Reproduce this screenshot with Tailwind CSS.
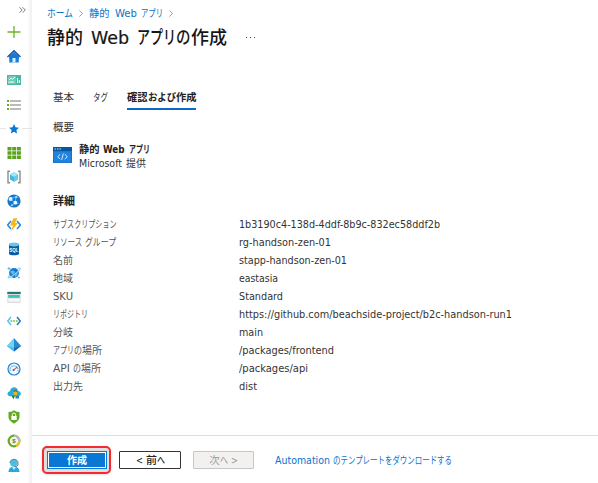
<!DOCTYPE html>
<html lang="ja"><head><meta charset="utf-8"><title>静的 Web アプリの作成</title>
<script src="https://cdn.jsdelivr.net/npm/@tailwindcss/browser@4"></script></head>
<body class="w-[598px] h-[483px] overflow-hidden flex bg-white text-[#333] text-[10.5px] font-['DejaVu_Sans_Condensed','DejaVu_Sans','Noto_Sans_CJK_JP',sans-serif] [&_[data-w]]:inline-block [&_[data-w]]:origin-left [&_[data-w]]:whitespace-pre">
<aside class="w-8 h-[483px] shrink-0 flex flex-col overflow-hidden bg-linear-to-r from-white from-84% to-[#f0f0f0]">
<div class="h-5 shrink-0 pt-[7px] pl-[19px]"><svg class="w-[7px] h-[6px]" viewBox="0 0 7 6" fill="none" stroke="#666" stroke-width=".9"><path d="M.5.3 3.2 3 .5 5.7M3.6.3 6.3 3 3.6 5.7"/></svg></div>
<nav class="flex flex-col shrink-0 pt-[0.3px] pl-[7px] [&>svg]:w-[14px] [&>svg]:h-[14px] [&>svg]:my-[5.04px] [&>svg]:shrink-0 [&>div]:h-[24.08px] [&>div]:shrink-0">
<svg viewBox="0 0 14 14"><path d="M7 1v12M.5 7h13" stroke="#6bb52b" stroke-width="1.3"/></svg>
<svg viewBox="0 0 14 14"><path d="M2.3 6h9.5v7.5H2.3z" fill="#1680da"/><path d="m0 7.4 7-6.7 7 6.7-.9 1L7 3 .9 8.4z" fill="#155ca9"/><path d="M2.3 7 7 3l4.8 4v3H2.3z" fill="#1a78d1"/><path d="M5.5 9h3v4.5h-3z" fill="#d7efff"/></svg>
<svg viewBox="0 0 14 14"><path d="M0 2h14v10H0z" fill="#4ab6a3"/><path d="M1 3h8v8H1z" fill="#6fc8b8"/><path d="m2 7 2-2 1.5 1.2L8 4M2 10V8.5M4 10V8M6 10V8M10.5 10V5M12.3 10V7" fill="none" stroke="#fff" stroke-width="1"/></svg>
<svg viewBox="0 0 14 14"><path d="M3 3h11M3 7h11M3 11h11" stroke="#777" stroke-width="1"/><path d="M0 3h2M0 7h2M0 11h2" stroke="#67ad29" stroke-width="1.8"/></svg>
<div class="-ml-[7px] flex items-center"><i class="h-px w-1.5 bg-[#e5e5e5]"></i><svg class="w-[16px] h-[14px]" viewBox="0 0 16 14"><path d="m8 2 1.5 3.3 3.5.4-2.6 2.3.7 3.5L8 9.7l-3.1 1.8.7-3.5L3 5.7l3.5-.4z" fill="#0878d4"/></svg><i class="h-px w-[10px] bg-[#e5e5e5]"></i></div>
<svg viewBox="0 0 14 14"><path d="M.5 1h4v3.5h-4zM5.2 1h4v3.5h-4zM9.9 1h4v3.5h-4zM.5 5.2h4v3.6h-4zM5.2 5.2h4v3.6h-4zM9.9 5.2h4v3.6h-4zM.5 9.5h4V13h-4zM5.2 9.5h4V13h-4zM9.9 9.5h4V13h-4z" fill="#59a31d"/></svg>
<svg viewBox="0 0 14 14"><path d="M3 1.3H1v11.4h2M11 1.3h2v11.4h-2" fill="none" stroke="#8b8b8b" stroke-width="1.4"/><path d="m7 2.3 4 2.3v4.8l-4 2.3-4-2.3V4.6z" fill="#42b8df"/><path d="m7 2.3 4 2.3L7 7 3 4.6z" fill="#a4e6f7"/><path d="M7 7v4.7l4-2.3V4.6z" fill="#68cce9"/></svg>
<svg viewBox="0 0 14 14"><circle cx="7" cy="7" r="6.6" fill="#1877cc"/><path d="M3 4.5 9 3l-1 6 3.5.5M3 4.5l5 4.5-3 2" fill="none" stroke="#61bbee" stroke-width=".9"/><circle cx="3.6" cy="5" r="2" fill="#d9f2ff"/><circle cx="9.3" cy="3" r="1.3" fill="#93d7fa"/><circle cx="8.4" cy="8.7" r="1.9" fill="#f0faff"/><circle cx="5" cy="11.2" r="1" fill="#a6ddf7"/></svg>
<svg viewBox="0 0 14 14"><path d="M4 3 .7 7 4 11M10 3l3.3 4-3.3 4" fill="none" stroke="#258ddd" stroke-width="1.6"/><path d="M6.5.3h4L8 5h3L4 13.5l2-6H3z" fill="#f9b51c"/></svg>
<svg viewBox="0 0 14 14"><path d="M2 2.3v9.5c0 2.1 10 2.1 10 0V2.3z" fill="#075ea8"/><ellipse cx="7" cy="2.5" rx="5" ry="1.9" fill="#67c6ec"/><text x="7" y="9.7" text-anchor="middle" font-size="4.5" font-weight="bold" fill="#fff" font-family="Liberation Sans">SQL</text></svg>
<svg viewBox="0 0 14 14"><circle cx="7" cy="7" r="4.9" fill="#1877ca"/><path d="M3 5.5q3-2 4.5-.3T5 8.5zM8 8l3-1-1 3-2 1z" fill="#5eb8ee"/><path d="M3 9C-.5 12.8 1 13 6 9.5S15 2 12.5 2q-1 0-2 .7" fill="none" stroke="#90d4f2" stroke-width="1.2"/><path d="M2 1v3M.5 2.5h3M12 10.5v2M11 11.5h2" stroke="#39ade2" stroke-width=".8"/></svg>
<svg viewBox="0 0 14 14"><path d="M.3 2h13.4v11H.3z" fill="#dedede"/><path d="M.3 1.8h13.4V4H.3z" fill="#207c76"/><path d="M1.2 5h11.6v2.8H1.2z" fill="#38c5b4"/><path d="M1.2 8.6h11.6v3H1.2z" fill="#f7f7f7"/></svg>
<svg viewBox="0 0 14 14"><path d="M4 3 .8 7 4 11" fill="none" stroke="#59c3ef" stroke-width="1.5"/><path d="m10 3 3.2 4-3.2 4" fill="none" stroke="#1b79c9" stroke-width="1.5"/><path d="M3.5 7h1.7M6.2 7h1.7M8.9 7h1.7" stroke="#75b82c" stroke-width="1.7"/></svg>
<svg viewBox="0 0 14 14"><path d="M7 .2 14 8l-7 5.6L0 8z" fill="#3ba7df"/><path d="M7 .2 0 8l7 2z" fill="#73d2f3"/><path d="m7 .2 7 7.8-7 2z" fill="#288bd0"/><path d="m0 8 7 2v3.6z" fill="#4ebeea"/><path d="m14 8-7 2v3.6z" fill="#1765b5"/></svg>
<svg viewBox="0 0 14 14"><circle cx="7" cy="7" r="6" fill="#effaff" stroke="#267fcd" stroke-width="1.2"/><path d="M3.2 9a4 4 0 1 1 7.6 0" fill="none" stroke="#62b6e9" stroke-width="1.3" stroke-dasharray="1.5 .7"/><path d="m6.2 8.3 4-3.3" stroke="#e24c50" stroke-width="1.1"/><circle cx="6.5" cy="8" r="1" fill="#4d657c"/></svg>
<svg viewBox="0 0 14 14"><path d="M3.5 10.3C-.5 10.3-.4 5.7 3 5.2 4-.5 10.8.7 11 5c4 .5 3.5 5.3.2 5.3z" fill="#23addf"/><path d="M4.5 9.8h3.5l-1.5 3.4z" fill="#23802f"/><path d="M6.5 5.7h3.7v3.2H6.5z" fill="#edb51c"/><path d="M7.2 6V4.5h2.2V6" fill="none" stroke="#705d27" stroke-width=".8"/><path d="M8.5 10H12v2.5H8.5z" fill="#2584c7"/></svg>
<svg viewBox="0 0 14 14"><path d="M7 .2q2.6 1.9 5.5 1.9v5q0 3.6-5.5 6.7-5.5-3.1-5.5-6.7v-5Q4.4 2.1 7 .2z" fill="#64a91e"/><path d="M4.3 6h5.4v4H4.3z" fill="#fff"/><path d="M5.3 6V4.5q0-1.4 1.7-1.4t1.7 1.4V6" fill="none" stroke="#fff"/></svg>
<svg viewBox="0 0 14 14"><circle cx="7" cy="7" r="5.3" fill="none" stroke="#69a92d" stroke-width="2.3"/><path d="M7 1.7A5.3 5.3 0 0 1 12.3 7" fill="none" stroke="#bababa" stroke-width="2.3"/><path d="M12.3 7A5.3 5.3 0 0 1 9 11.9" fill="none" stroke="#ecc637" stroke-width="2.3"/><circle cx="7" cy="7" r="3.2" fill="#eef4e7"/><text x="7" y="9.2" text-anchor="middle" font-size="6" font-weight="bold" fill="#527f2a" font-family="Liberation Sans">$</text></svg>
<svg viewBox="0 0 14 14"><path d="M1.5 14q0-5.2 5.5-5.2t5.5 5.2z" fill="#25a9dc"/><circle cx="6.8" cy="5" r="3.7" fill="#48bee8"/><path d="M3 5C3 0 11 0 11 5v2q-1 2-3.5 1.7" fill="none" stroke="#777" stroke-width="1"/><path d="m5 9 2 3 2-3z" fill="#c8effb"/></svg>
<svg viewBox="0 0 14 14"><path d="m7-1 2 4H5z" fill="#f5b52b"/></svg>
</nav></aside>
<main class="w-[566px] h-[483px] flex flex-col">
<header class="h-[84px] pl-[15px]">
<nav class="pt-[5px] h-[22px] flex leading-4 text-[#0b73cc]"><span data-w="26">ホーム</span><svg class="ml-[6px] mr-[6px] mt-[5px] w-[4px] h-[7px]" viewBox="0 0 4 7"><path d="m.4.4 3 3.1-3 3.1" fill="none" stroke="#888" stroke-width=".8"/></svg><span data-w="20.5">静的</span><span data-w="22" class="ml-[5px]">Web</span><span data-w="22" class="ml-[4px]">アプリ</span><svg class="ml-[6px] mt-[5px] w-[4px] h-[7px]" viewBox="0 0 4 7"><path d="m.4.4 3 3.1-3 3.1" fill="none" stroke="#888" stroke-width=".8"/></svg></nav>
<h1 class="flex h-8 leading-8 text-[18.5px] font-medium text-[#161616]"><span data-w="36">静的</span><span data-w="38" class="ml-[8px] font-normal [-webkit-text-stroke:0.2px]">Web</span><span data-w="39" class="ml-[8px]">アプリ</span><span data-w="14.5">の</span><span data-w="36">作成</span><span class="ml-[19px] mt-[15px] flex gap-[3px] h-px"><i class="w-px h-px bg-[#444]"></i><i class="w-px h-px bg-[#444]"></i><i class="w-px h-px bg-[#444]"></i></span></h1>
</header>
<section class="h-[351px] pl-[21px]">
<div class="flex h-[26px] leading-[26px]"><span data-w="21">基本</span><span data-w="15" class="ml-[19px]">タグ</span><span class="ml-[19px] w-[69px] border-b-2 border-[#0b69c7] flex font-bold text-[#222]"><span data-w="20.5">確認</span><span data-w="28">および</span><span data-w="20.5">作成</span></span></div>
<div class="h-[31px] pt-[7px] leading-5"><span data-w="21">概要</span></div>
<div class="flex h-[47px]"><svg class="mt-[6px] w-[19px] h-4" viewBox="0 0 19 16"><rect width="19" height="16" rx=".6" fill="#1b70cb"/><path d="M0 0h19v4H0z" fill="#0756a3"/><path d="M1.5 2h1.6M4 2h1.6M6.5 2h1.6" stroke="#bde8ff" stroke-width="1.2"/><path d="M1 4.5h17v10.7H1z" fill="#2383dc"/><path d="M7.2 7.3 4.7 9.7l2.5 2.4M11.8 7.3l2.5 2.4-2.5 2.4M10.3 6.6l-1.6 6.2" stroke="#e3f5ff" fill="none" stroke-width=".9"/></svg>
<div class="ml-[7px] mt-[1px] leading-[14px]"><div class="flex h-[14px] font-bold text-[#222]"><span data-w="20.5">静的</span><span data-w="21.5" class="ml-[3.5px]">Web</span><span data-w="21" class="ml-[4px]">アプリ</span></div><div class="flex h-[14px]"><span data-w="43">Microsoft</span><span data-w="20" class="ml-[4px]">提供</span></div></div></div>
<h2 class="h-[28px] pt-[4px] leading-5 font-bold text-[11px] text-[#222]"><span data-w="22">詳細</span></h2>
<dl class="grid grid-cols-[186px_1fr] auto-rows-[18px] leading-[18px] text-[10px] [&_dt]:flex [&_dt]:text-[#555]">
<dt><span data-w="63.5">サブスクリプション</span></dt><dd><span data-w="201">1b3190c4-138d-4ddf-8b9c-832ec58ddf2b</span></dd>
<dt><span data-w="29">リソース</span><span data-w="31" class="ml-[3px]">グループ</span></dt><dd><span data-w="92">rg-handson-zen-01</span></dd>
<dt><span data-w="20">名前</span></dt><dd><span data-w="108">stapp-handson-zen-01</span></dd>
<dt><span data-w="20">地域</span></dt><dd><span data-w="39">eastasia</span></dd>
<dt><span data-w="20">SKU</span></dt><dd><span data-w="44">Standard</span></dd>
<dt><span data-w="35">リポジトリ</span></dt><dd><span data-w="273">https://github.com/beachside-project/b2c-handson-run1</span></dd>
<dt><span data-w="20">分岐</span></dt><dd><span data-w="24">main</span></dd>
<dt><span data-w="21">アプリ</span><span data-w="8">の</span><span data-w="20">場所</span></dt><dd><span data-w="95">/packages/frontend</span></dd>
<dt><span data-w="17">API</span><span data-w="8" class="ml-[3px]">の</span><span data-w="20">場所</span></dt><dd><span data-w="69">/packages/api</span></dd>
<dt><span data-w="30">出力先</span></dt><dd><span data-w="18">dist</span></dd>
</dl></section>
<footer class="h-12 border-t border-[#dedede] flex pl-[10px] pt-[10px]">
<div class="w-[69px] h-[28px] rounded-[5px] border-2 border-[#f52a30] bg-[#dedede] shadow-sm flex justify-center items-center"><button class="w-[60px] h-[18px] border border-[#0878d4] bg-white p-px"><span class="flex h-full items-center justify-center bg-[#0878d4] text-white font-bold leading-none"><span data-w="20">作成</span></span></button></div>
<button class="ml-[8px] mt-[5px] w-[62px] h-[18px] border border-[#333] rounded-[1px] flex items-center justify-center leading-none text-[#222] font-medium"><span data-w="7">&lt;</span><span data-w="11" class="ml-[3px]">前</span><span data-w="8">へ</span></button>
<button class="ml-[12px] mt-[5px] w-[61px] h-[18px] border border-[#c6c6c6] bg-[#f2f1f0] rounded-[1px] flex items-center justify-center leading-none text-[#999]"><span data-w="10.5">次</span><span data-w="8">へ</span><span data-w="7" class="ml-[3px]">&gt;</span></button>
<a class="ml-[21px] mt-[7px] h-4 leading-4 flex text-[#0b73cc] text-[10px]"><span data-w="55">Automation</span><span data-w="119" class="ml-[3px]">のテンプレートをダウンロードする</span></a>
</footer></main>
<script>
// Condense each text run to its column width, once styles and fonts are ready.
function fit() {
  for (const e of document.querySelectorAll('[data-w]')) {
    e.style.cssText = 'flex-shrink:0';
    const n = e.getBoundingClientRect().width, w = +e.dataset.w;
    e.style.transform = `scaleX(${w / n})`;
    e.style.marginRight = (w - n) + 'px';
  }
}
fit();
addEventListener('load', () => { fit(); document.fonts.ready.then(fit); requestAnimationFrame(fit); });
</script>
</body></html>
